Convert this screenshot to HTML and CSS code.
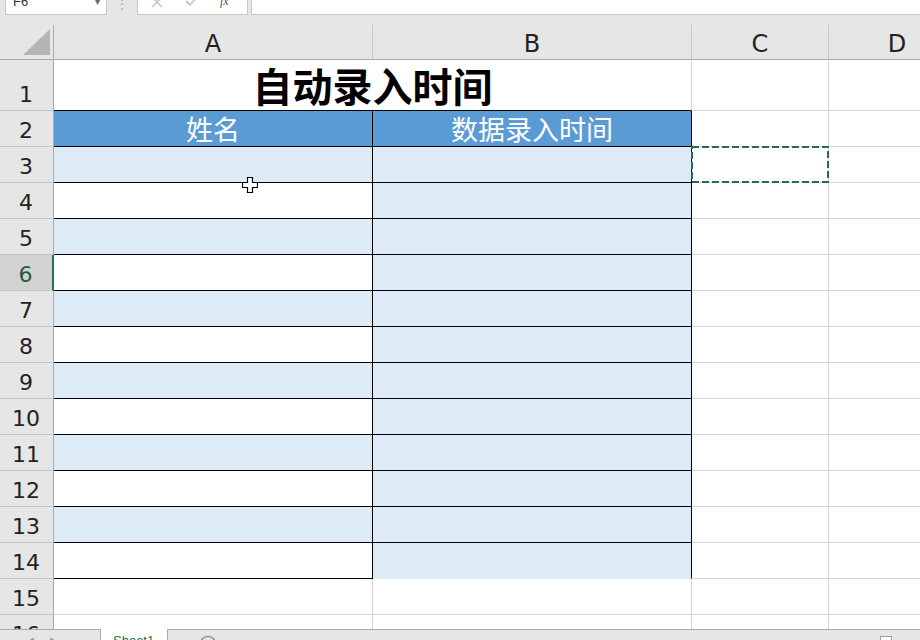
FILE: index.html
```html
<!DOCTYPE html>
<html lang="zh">
<head>
<meta charset="utf-8">
<title>自动录入时间</title>
<link rel="stylesheet" href="styles.css">
</head>
<body>
<div class="app">
  <div class="toolbar">
    <div class="namebox"><span class="name">F6</span><span class="caret">▾</span></div>
    <div class="sep">⋮</div>
    <div class="fxbox">
      <svg class="ico" width="14" height="14" viewBox="0 0 14 14"><path d="M2 2 L12 12 M12 2 L2 12" stroke="#c8c8c8" stroke-width="1.6" fill="none"/></svg>
      <svg class="ico" width="16" height="14" viewBox="0 0 16 14"><path d="M2 6 L6 10 L14 1" stroke="#c8c8c8" stroke-width="1.8" fill="none"/></svg>
      <span class="fx">fx</span>
    </div>
    <div class="formula"></div>
  </div>

  <div class="viewport">
    <div class="grid">
      <div class="corner"><svg width="54" height="35" viewBox="0 0 54 35"><polygon points="50,4 50,30 23,30" fill="#b4b4b4"/></svg></div>
      <div class="ch">A</div>
      <div class="ch">B</div>
      <div class="ch">C</div>
      <div class="ch">D</div>

      <div class="rh">1</div>
      <div class="c title">自动录入时间</div>
      <div class="c"></div>
      <div class="c"></div>

      <div class="rh">2</div>
      <div class="c t head">姓名</div>
      <div class="c t head">数据录入时间</div>
      <div class="c"></div>
      <div class="c"></div>

      <div class="rh">3</div>
      <div class="c t lb"></div>
      <div class="c t lb"></div>
      <div class="c marq"><svg class="ants" width="138" height="37" viewBox="0 0 138 37"><rect x="1" y="1" width="136" height="35" fill="none" stroke="#2a6b4c" stroke-width="2" stroke-dasharray="7 3"/></svg></div>
      <div class="c"></div>

      <div class="rh">4</div>
      <div class="c t"></div>
      <div class="c t lb"></div>
      <div class="c"></div>
      <div class="c"></div>

      <div class="rh">5</div>
      <div class="c t lb"></div>
      <div class="c t lb"></div>
      <div class="c"></div>
      <div class="c"></div>

      <div class="rh sel">6</div>
      <div class="c t"></div>
      <div class="c t lb"></div>
      <div class="c"></div>
      <div class="c"></div>

      <div class="rh">7</div>
      <div class="c t lb"></div>
      <div class="c t lb"></div>
      <div class="c"></div>
      <div class="c"></div>

      <div class="rh">8</div>
      <div class="c t"></div>
      <div class="c t lb"></div>
      <div class="c"></div>
      <div class="c"></div>

      <div class="rh">9</div>
      <div class="c t lb"></div>
      <div class="c t lb"></div>
      <div class="c"></div>
      <div class="c"></div>

      <div class="rh">10</div>
      <div class="c t"></div>
      <div class="c t lb"></div>
      <div class="c"></div>
      <div class="c"></div>

      <div class="rh">11</div>
      <div class="c t lb"></div>
      <div class="c t lb"></div>
      <div class="c"></div>
      <div class="c"></div>

      <div class="rh">12</div>
      <div class="c t"></div>
      <div class="c t lb"></div>
      <div class="c"></div>
      <div class="c"></div>

      <div class="rh">13</div>
      <div class="c t lb"></div>
      <div class="c t lb"></div>
      <div class="c"></div>
      <div class="c"></div>

      <div class="rh">14</div>
      <div class="c t"></div>
      <div class="c t lb last"></div>
      <div class="c"></div>
      <div class="c"></div>

      <div class="rh">15</div>
      <div class="c"></div>
      <div class="c"></div>
      <div class="c"></div>
      <div class="c"></div>

      <div class="rh">16</div>
      <div class="c"></div>
      <div class="c"></div>
      <div class="c"></div>
      <div class="c"></div>
    </div>
  </div>

  <div class="tabs">
    <div class="navs"><span class="nav">◀</span><span class="nav">▶</span></div>
    <div class="tab">Sheet1</div>
    <div class="add">
      <svg width="18" height="18" viewBox="0 0 18 18"><circle cx="9" cy="9" r="7.5" fill="none" stroke="#7a7a7a" stroke-width="1.2"/><path d="M9 5 V13 M5 9 H13" stroke="#7a7a7a" stroke-width="1.2"/></svg>
    </div>
    <div class="spacer"></div>
    <div class="mini"></div>
  </div>

  <svg class="cursor" width="16" height="16" viewBox="0 0 16 16"><polygon points="5.5,0.5 10.5,0.5 10.5,5.5 15.5,5.5 15.5,10.5 10.5,10.5 10.5,15.5 5.5,15.5 5.5,10.5 0.5,10.5 0.5,5.5 5.5,5.5" fill="#fff" stroke="#000" stroke-width="1.2"/></svg>
</div>
</body>
</html>
```

FILE: styles.css
```css
* { box-sizing: border-box; }
html, body { margin: 0; padding: 0; }
body {
  width: 920px;
  height: 640px;
  overflow: hidden;
  background: #fff;
  font-family: "Liberation Sans", "Noto Sans CJK SC", sans-serif;
}
.app {
  position: relative;
  width: 920px;
  height: 640px;
  overflow: hidden;
  background: #e6e6e6;
}

/* ---------- toolbar ---------- */
.toolbar {
  height: 25px;
  display: flex;
  align-items: flex-start;
  background: #e6e6e6;
  overflow: hidden;
}
.namebox {
  margin-left: 5px;
  margin-top: -12px;
  width: 102px;
  height: 27px;
  background: #fff;
  border: 1px solid #c6c6c6;
  display: flex;
  align-items: center;
  justify-content: space-between;
  padding: 0 6px 0 7px;
  font-size: 13px;
  color: #333;
}
.caret { font-size: 10px; color: #666; }
.sep {
  width: 30px;
  margin-top: -4px;
  text-align: center;
  color: #b0b0b0;
  font-size: 14px;
}
.fxbox {
  margin-top: -12px;
  width: 111px;
  height: 27px;
  background: #fff;
  border: 1px solid #c6c6c6;
  display: flex;
  align-items: center;
  padding: 0 0 0 12px;
  gap: 20px;
}
.fx {
  font-family: "Liberation Serif", serif;
  font-style: italic;
  font-size: 12px;
  color: #555;
}
.formula {
  margin-left: 3px;
  margin-top: -12px;
  flex: 1;
  height: 27px;
  background: #fff;
  border: 1px solid #c6c6c6;
  border-right: none;
}

/* ---------- grid ---------- */
.viewport {
  height: 604px;
  overflow: hidden;
  background: #fff;
}
.grid {
  display: grid;
  width: 1100px;
  grid-template-columns: 54px 319px 319px 137px 137px;
  grid-template-rows: 35px 51px repeat(15, 36px);
}
.corner {
  background: #e6e6e6;
  border-right: 1px solid #ababab;
  border-bottom: 1px solid #ababab;
}
.corner svg { display: block; }
.ch {
  background: #e6e6e6;
  border-right: 1px solid #c6c6c6;
  border-bottom: 1px solid #ababab;
  display: flex;
  align-items: center;
  justify-content: center;
  padding-top: 3px;
  font-family: "DejaVu Sans", sans-serif;
  font-size: 24px;
  color: #222;
}
.rh {
  background: #e6e6e6;
  border-right: 1px solid #ababab;
  border-bottom: 1px solid #c6c6c6;
  display: flex;
  align-items: flex-end;
  justify-content: center;
  padding-bottom: 3px;
  padding-right: 1px;
  font-family: "DejaVu Sans", sans-serif;
  font-size: 22px;
  color: #222;
}
.rh.sel {
  background: #d2d2d2;
  color: #1f5e3d;
  border-right: 2px solid #217346;
}
.c {
  border-right: 1px solid #d4d4d4;
  border-bottom: 1px solid #d4d4d4;
  background: #fff;
}
.c.t {
  border-right-color: #000;
  border-bottom-color: #000;
}
.c.lb { background: #ddebf7; }
.c.last { border-bottom-color: #ddebf7; }
.title {
  grid-column: span 2;
  border-bottom-color: #000;
  display: flex;
  align-items: flex-end;
  justify-content: center;
  padding-bottom: 1px;
  font-family: "Noto Sans CJK SC", sans-serif;
  font-weight: 700;
  font-size: 40px;
  line-height: 48px;
  color: #000;
}
.head {
  background: #5b9bd5;
  color: #fff;
  display: flex;
  align-items: flex-end;
  justify-content: center;
  font-family: "Noto Sans CJK SC", sans-serif;
  font-size: 27px;
  line-height: 35px;
}
.marq { position: relative; }
.ants {
  position: absolute;
  left: -1px;
  top: -1px;
  display: block;
}

/* ---------- sheet tabs ---------- */
.tabs {
  height: 11px;
  border-top: 1px solid #ababab;
  background: #e6e6e6;
  display: flex;
  align-items: flex-start;
  overflow: visible;
}
.navs {
  width: 100px;
  display: flex;
  gap: 14px;
  padding-left: 26px;
  padding-top: 5px;
  font-size: 9px;
  color: #9a9a9a;
}
.tab {
  width: 68px;
  height: 26px;
  background: #fff;
  border-left: 1px solid #ababab;
  border-right: 1px solid #ababab;
  margin-top: -1px;
  padding-left: 12px;
  padding-top: 4px;
  font-size: 13px;
  color: #217346;
}
.add { padding: 5px 0 0 31px; }
.add svg { display: block; }
.spacer { flex: 1; }
.mini {
  width: 12px;
  height: 12px;
  margin: 6px 28px 0 0;
  background: #fff;
  border: 1px solid #9a9a9a;
}

/* ---------- mouse cursor ---------- */
.cursor {
  position: absolute;
  left: 242px;
  top: 177px;
}
```
